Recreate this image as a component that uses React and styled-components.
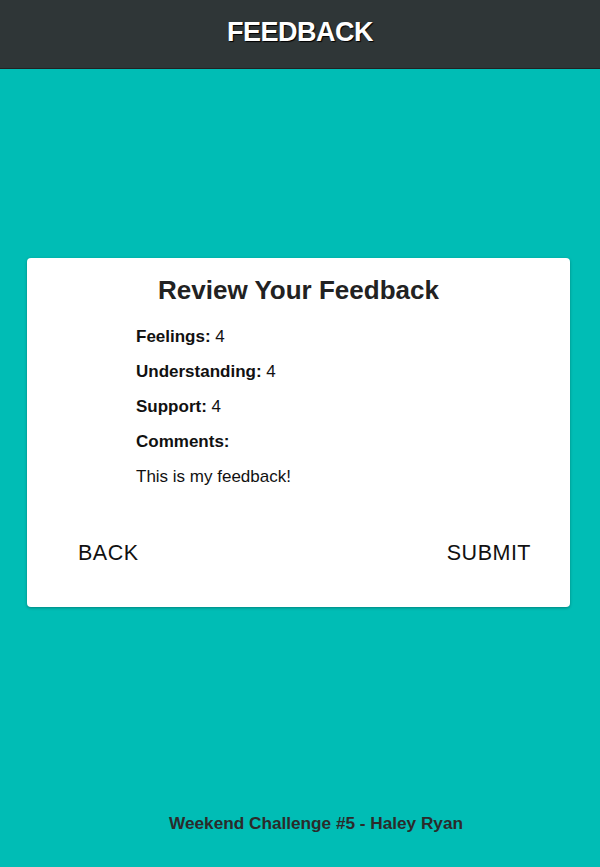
import React from 'react';
import styled, { createGlobalStyle } from 'styled-components';

const GlobalStyle = createGlobalStyle`
  html, body {
    margin: 0;
    padding: 0;
    background: #00bdb5;
    font-family: "Liberation Sans", Arial, sans-serif;
  }
`;

const feedback = {
    feelings: 4,
    understanding: 4,
    support: 4,
    comments: 'This is my feedback!'
};

const App = () => {
    return (
        <Page>
            <GlobalStyle />
            <Header>
                <HeaderTitle>FEEDBACK</HeaderTitle>
            </Header>
            <Main>
                <Card>
                    <CardTitle>Review Your Feedback</CardTitle>
                    <List>
                        <Item><Label>Feelings:</Label> {feedback.feelings}</Item>
                        <Item><Label>Understanding:</Label> {feedback.understanding}</Item>
                        <Item><Label>Support:</Label> {feedback.support}</Item>
                        <Item><Label>Comments:</Label></Item>
                        <Item>{feedback.comments}</Item>
                    </List>
                    <ButtonRow>
                        <TextButton type="button">Back</TextButton>
                        <TextButton type="button">Submit</TextButton>
                    </ButtonRow>
                </Card>
            </Main>
            <Footer>Weekend Challenge #5 - Haley Ryan</Footer>
        </Page>
    );
};

// Styled components
const Page = styled.div`
  min-height: 867px;
  display: flex;
  flex-direction: column;
  background: #00bdb5;
`;

const Header = styled.header`
  height: 69px;
  box-sizing: border-box;
  padding-bottom: 4px;
  background-color: #2f3637;
  border-bottom: 1px solid #222;
  display: flex;
  align-items: center;
  justify-content: center;
`;

const HeaderTitle = styled.h1`
  margin: 0;
  color: #fff;
  font-size: 27px;
  font-weight: bold;
  text-shadow: 1px 1px 1px #000;
  letter-spacing: -0.5px;
`;

const Main = styled.main`
  padding: 189px 30px 0 27px;
`;

const Card = styled.div`
  height: 349px;
  box-sizing: border-box;
  background: #fff;
  border-radius: 4px;
  box-shadow: 0 1px 3px rgba(0, 0, 0, 0.3);
  padding-top: 17px;
`;

const CardTitle = styled.h2`
  margin: 0 0 14px;
  text-align: center;
  font-size: 26px;
  font-weight: bold;
  color: #222;
  line-height: 30px;
`;

const List = styled.div`
  padding-left: 109px;
`;

const Item = styled.p`
  margin: 0;
  font-size: 17px;
  line-height: 35px;
  color: #111;
`;

const Label = styled.strong`
  font-weight: bold;
`;

const ButtonRow = styled.div`
  display: flex;
  justify-content: space-between;
  padding: 47px 39px 0 51px;
`;

const TextButton = styled.button`
  background: none;
  border: none;
  padding: 0;
  font-family: "Liberation Sans", Arial, sans-serif;
  font-size: 21.5px;
  text-transform: uppercase;
  letter-spacing: 0.5px;
  color: #111;
  line-height: 24px;
  cursor: pointer;
`;

const Footer = styled.footer`
  margin-top: 206px;
  padding-left: 32px;
  text-align: center;
  font-size: 17.2px;
  font-weight: bold;
  color: #2b2b2b;
`;

export default App;
